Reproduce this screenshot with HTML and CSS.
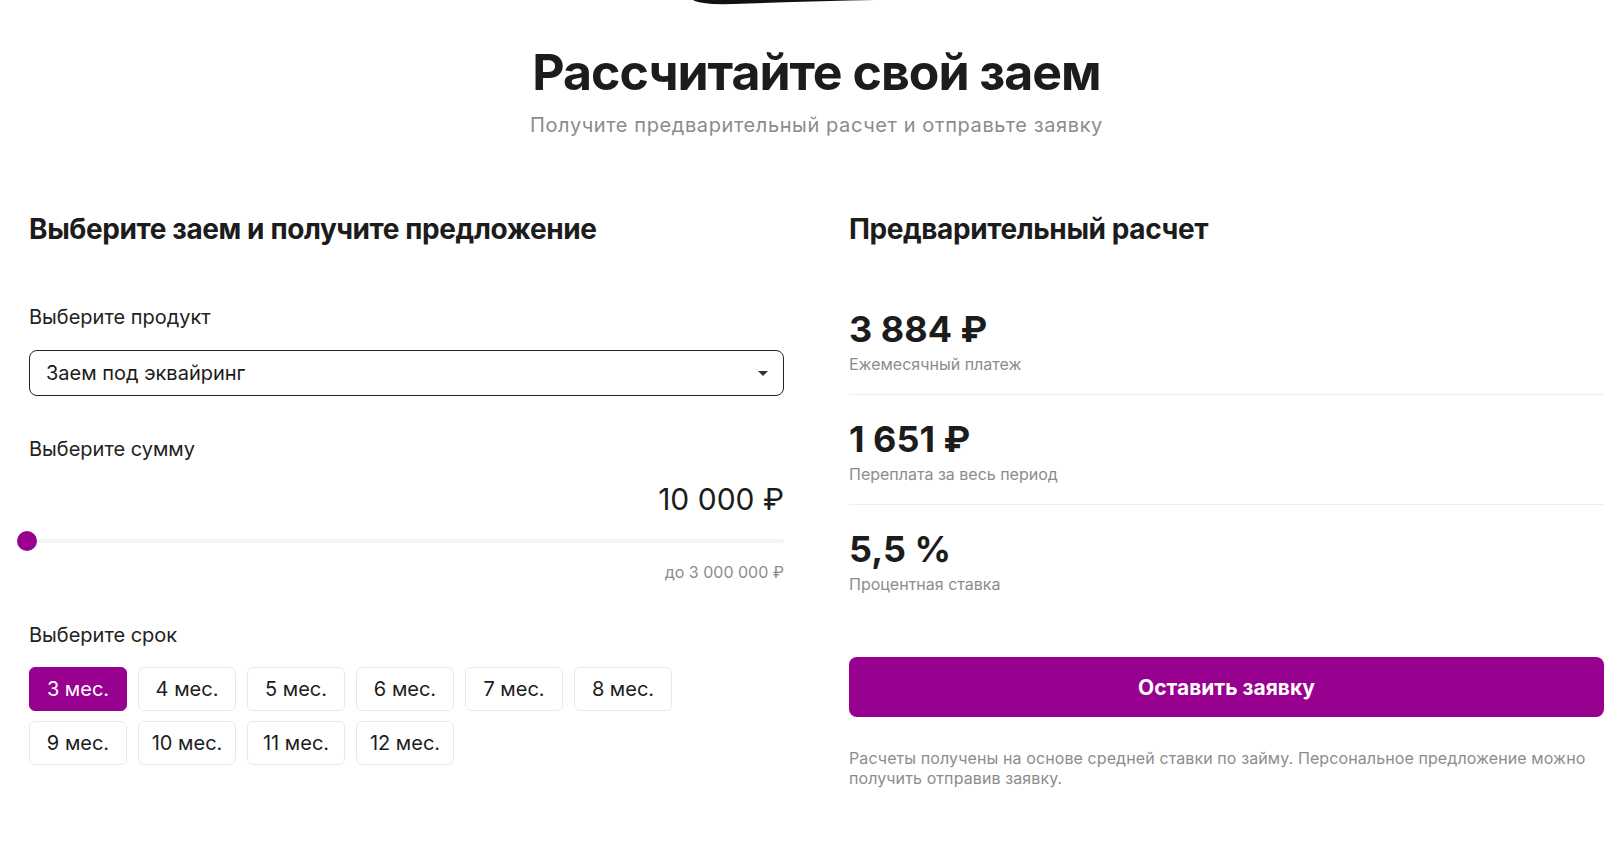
FILE: index.html
```html
<!DOCTYPE html>
<html lang="ru">
<head>
    <meta charset="UTF-8">
    <meta name="viewport" content="width=device-width, initial-scale=1.0">
    <title>Рассчитайте свой заем</title>
    <link rel="stylesheet" href="styles.css">
</head>
<body>
    <svg class="top-swoosh" width="182" height="5" viewBox="0 0 182 5">
        <path d="M0 0 H182 Q120 1 40 4 Q8 5 0 0 Z" fill="#111"/>
    </svg>

    <div class="calc">
        <h1 class="calc-title">Рассчитайте свой заем</h1>
        <p class="calc-subtitle">Получите предварительный расчет и отправьте заявку</p>

        <div class="calc-grid">
            <!-- параметры займа -->
            <div class="calc-form">
                <h2 class="calc-heading">Выберите заем и получите предложение</h2>

                <div class="field-label field-label-first">Выберите продукт</div>
                <div class="select">
                    <span>Заем под эквайринг</span>
                    <span class="select-arrow"></span>
                </div>

                <div class="field-label">Выберите сумму</div>
                <div class="amount">10 000 ₽</div>
                <div class="slider">
                    <div class="slider-track"></div>
                    <div class="slider-thumb"></div>
                </div>
                <div class="amount-max">до 3 000 000 ₽</div>

                <div class="field-label">Выберите срок</div>
                <div class="terms">
                    <button class="term term-active">3 мес.</button>
                    <button class="term">4 мес.</button>
                    <button class="term">5 мес.</button>
                    <button class="term">6 мес.</button>
                    <button class="term">7 мес.</button>
                    <button class="term">8 мес.</button>
                    <button class="term">9 мес.</button>
                    <button class="term">10 мес.</button>
                    <button class="term">11 мес.</button>
                    <button class="term">12 мес.</button>
                </div>
            </div>

            <!-- результат -->
            <div class="calc-result">
                <h2 class="calc-heading">Предварительный расчет</h2>

                <div class="result-list">
                    <div class="result-item">
                        <div class="result-value">3 884 ₽</div>
                        <div class="result-caption">Ежемесячный платеж</div>
                    </div>
                    <div class="result-item">
                        <div class="result-value">1 651 ₽</div>
                        <div class="result-caption">Переплата за весь период</div>
                    </div>
                    <div class="result-item result-item-last">
                        <div class="result-value">5,5 %</div>
                        <div class="result-caption">Процентная ставка</div>
                    </div>
                </div>

                <button class="submit-btn">Оставить заявку</button>

                <p class="result-note">Расчеты получены на основе средней ставки по займу. Персональное предложение можно получить отправив заявку.</p>
            </div>
        </div>
    </div>
</body>
</html>
```

FILE: styles.css
```css
* {
    box-sizing: border-box;
}
body {
    margin: 0;
    font-family: Inter, "Noto Sans", Arial, sans-serif;
    color: #1c1c1c;
    background: #fff;
}
.top-swoosh {
    position: absolute;
    top: 0;
    left: 693px;
}
.calc {
    padding: 41px 7px 0 29px;
}
.calc-title {
    margin: 0;
    font-size: 50px;
    line-height: 62px;
    font-weight: 700;
    letter-spacing: -1px;
    text-align: center;
}
.calc-subtitle {
    margin: 8px 0 0;
    font-size: 20px;
    line-height: 28px;
    letter-spacing: 0.6px;
    color: #8c8c8c;
    text-align: center;
}
.calc-grid {
    display: grid;
    grid-template-columns: 1fr 1fr;
    column-gap: 65px;
    margin-top: 72px;
}
.calc-heading {
    margin: 0;
    font-size: 28px;
    line-height: 36px;
    font-weight: 700;
    letter-spacing: -0.4px;
}
.field-label {
    margin-top: 41px;
    font-size: 20px;
    line-height: 24px;
    color: #222;
}
.field-label-first {
    margin-top: 58px;
}
.select {
    display: flex;
    align-items: center;
    justify-content: space-between;
    height: 46px;
    margin-top: 21px;
    padding: 0 15px 0 16px;
    border: 1px solid #222;
    border-radius: 8px;
    font-size: 20px;
}
.select-arrow {
    width: 0;
    height: 0;
    border-left: 5px solid transparent;
    border-right: 5px solid transparent;
    border-top: 5px solid #333;
}
.amount {
    margin-top: 18px;
    font-size: 30px;
    line-height: 40px;
    text-align: right;
    color: #1c1c1c;
}
.slider {
    position: relative;
    height: 20px;
    margin-top: 12px;
}
.slider-track {
    position: absolute;
    top: 8px;
    left: 0;
    right: 0;
    height: 4px;
    border-radius: 2px;
    background: #f4f4f4;
}
.slider-thumb {
    position: absolute;
    top: 0;
    left: -12px;
    width: 20px;
    height: 20px;
    border-radius: 50%;
    background: #98008f;
}
.amount-max {
    margin-top: 11px;
    font-size: 16px;
    line-height: 20px;
    color: #8c8c8c;
    text-align: right;
}
.terms {
    display: flex;
    flex-wrap: wrap;
    gap: 10px 11px;
    width: 650px;
    margin-top: 20px;
}
.term {
    width: 98px;
    height: 44px;
    padding: 0;
    border: 1px solid #e9e9e9;
    border-radius: 6px;
    background: #fff;
    font-family: inherit;
    font-size: 20px;
    color: #1c1c1c;
    cursor: pointer;
}
.term-active {
    border-color: #98008f;
    background: #98008f;
    color: #fff;
}
.result-list {
    margin-top: 38px;
}
.result-item {
    padding: 22px 0 20px;
    border-bottom: 1px solid #eeeeee;
}
.result-item-last {
    border-bottom: none;
}
.result-value {
    font-size: 36px;
    line-height: 44px;
    font-weight: 700;
}
.result-caption {
    margin-top: 3px;
    font-size: 16px;
    line-height: 20px;
    color: #8c8c8c;
}
.submit-btn {
    display: block;
    width: 100%;
    height: 60px;
    margin-top: 43px;
    border: none;
    border-radius: 8px;
    background: #98008f;
    color: #fff;
    font-family: inherit;
    font-size: 21px;
    font-weight: 700;
    cursor: pointer;
}
.result-note {
    margin: 31px 0 0;
    font-size: 16px;
    line-height: 20px;
    letter-spacing: 0.1px;
    color: #8c8c8c;
}
```
